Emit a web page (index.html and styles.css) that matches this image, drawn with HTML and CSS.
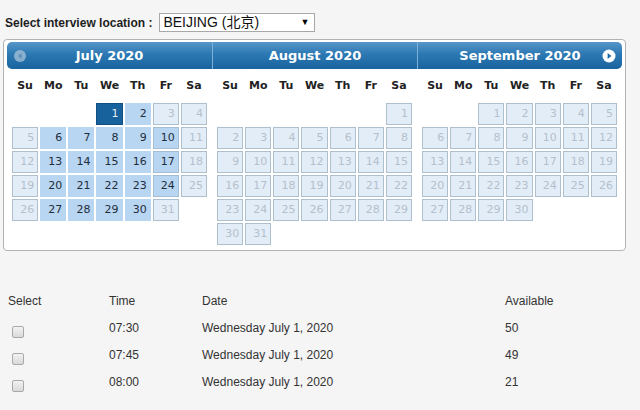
FILE: index.html
```html
<!DOCTYPE html>
<html>
<head>
<meta charset="utf-8">
<link rel="stylesheet" href="styles.css">
</head>
<body>
<div class="loc">
  <span class="loc-label">Select interview location :</span>
  <div class="select"><span class="select-text">BEIJING (北京)</span><span class="caret">▼</span></div>
</div>

<div class="cal">
  <div class="month first">
    <div class="mhead">
      <span class="nav prev"><svg width="14" height="14" viewBox="0 0 14 14"><circle cx="7" cy="7" r="6" fill="#a9c3da" opacity="0.75"/><path d="M8.6 4.2 L5 7 L8.6 9.8 Z" fill="#5f8db4"/></svg></span>
      <span class="title">July 2020</span>
    </div>
    <div class="grid dows"><span>Su</span><span>Mo</span><span>Tu</span><span>We</span><span>Th</span><span>Fr</span><span>Sa</span></div>
    <div class="grid days">
      <span></span><span></span><span></span>
      <a class="d sel">1</a><a class="d on">2</a><a class="d off">3</a><a class="d off">4</a>
      <a class="d off">5</a><a class="d on">6</a><a class="d on">7</a><a class="d on">8</a><a class="d on">9</a><a class="d on fr">10</a><a class="d off">11</a>
      <a class="d off">12</a><a class="d on">13</a><a class="d on">14</a><a class="d on">15</a><a class="d on">16</a><a class="d on fr">17</a><a class="d off">18</a>
      <a class="d off">19</a><a class="d on">20</a><a class="d on">21</a><a class="d on">22</a><a class="d on">23</a><a class="d on fr">24</a><a class="d off">25</a>
      <a class="d off">26</a><a class="d on">27</a><a class="d on">28</a><a class="d on">29</a><a class="d on">30</a><a class="d off">31</a>
    </div>
  </div>

  <div class="month mid">
    <div class="mhead"><span class="title">August 2020</span></div>
    <div class="grid dows"><span>Su</span><span>Mo</span><span>Tu</span><span>We</span><span>Th</span><span>Fr</span><span>Sa</span></div>
    <div class="grid days">
      <span></span><span></span><span></span><span></span><span></span><span></span>
      <a class="d off">1</a>
      <a class="d off">2</a><a class="d off">3</a><a class="d off">4</a><a class="d off">5</a><a class="d off">6</a><a class="d off">7</a><a class="d off">8</a>
      <a class="d off">9</a><a class="d off">10</a><a class="d off">11</a><a class="d off">12</a><a class="d off">13</a><a class="d off">14</a><a class="d off">15</a>
      <a class="d off">16</a><a class="d off">17</a><a class="d off">18</a><a class="d off">19</a><a class="d off">20</a><a class="d off">21</a><a class="d off">22</a>
      <a class="d off">23</a><a class="d off">24</a><a class="d off">25</a><a class="d off">26</a><a class="d off">27</a><a class="d off">28</a><a class="d off">29</a>
      <a class="d off">30</a><a class="d off">31</a>
    </div>
  </div>

  <div class="month last">
    <div class="mhead">
      <span class="title">September 2020</span>
      <span class="nav next"><svg width="14" height="14" viewBox="0 0 14 14"><circle cx="7" cy="7" r="6.5" fill="#ffffff"/><path d="M5.6 4 L9.4 7 L5.6 10 Z" fill="#1d68a3"/></svg></span>
    </div>
    <div class="grid dows"><span>Su</span><span>Mo</span><span>Tu</span><span>We</span><span>Th</span><span>Fr</span><span>Sa</span></div>
    <div class="grid days">
      <span></span><span></span>
      <a class="d off">1</a><a class="d off">2</a><a class="d off">3</a><a class="d off">4</a><a class="d off">5</a>
      <a class="d off">6</a><a class="d off">7</a><a class="d off">8</a><a class="d off">9</a><a class="d off">10</a><a class="d off">11</a><a class="d off">12</a>
      <a class="d off">13</a><a class="d off">14</a><a class="d off">15</a><a class="d off">16</a><a class="d off">17</a><a class="d off">18</a><a class="d off">19</a>
      <a class="d off">20</a><a class="d off">21</a><a class="d off">22</a><a class="d off">23</a><a class="d off">24</a><a class="d off">25</a><a class="d off">26</a>
      <a class="d off">27</a><a class="d off">28</a><a class="d off">29</a><a class="d off">30</a>
    </div>
  </div>
</div>

<div class="slots">
  <div class="th">Select</div><div class="th">Time</div><div class="th">Date</div><div class="th">Available</div>
  <div class="cb-cell"><input type="checkbox" class="cb"></div><div>07:30</div><div>Wednesday July 1, 2020</div><div>50</div>
  <div class="cb-cell"><input type="checkbox" class="cb"></div><div>07:45</div><div>Wednesday July 1, 2020</div><div>49</div>
  <div class="cb-cell"><input type="checkbox" class="cb"></div><div>08:00</div><div>Wednesday July 1, 2020</div><div>21</div>
</div>
</body>
</html>
```

FILE: styles.css
```css
html, body {
  margin: 0;
  padding: 0;
}
body {
  background: #f5f5f5;
  font-family: "Liberation Sans", Arial, sans-serif;
  color: #333;
  width: 640px;
  height: 410px;
  overflow: hidden;
}

/* location selector */
.loc {
  display: flex;
  align-items: center;
  padding: 13px 0 0 5px;
  height: 19px;
}
.loc-label {
  font-weight: bold;
  font-size: 12px;
  color: #1e1e1e;
}
.select {
  margin-left: 7px;
  width: 156px;
  height: 19px;
  box-sizing: border-box;
  border: 1px solid #a8a8a8;
  background: #fff;
  display: flex;
  align-items: center;
  justify-content: space-between;
  padding: 0 5px 0 3px;
  font-family: "Liberation Sans", "Noto Sans CJK SC", sans-serif;
  font-size: 14px;
  color: #111;
}
.select-text {
  line-height: 17px;
}
.caret {
  font-size: 9px;
  color: #000;
  line-height: 17px;
}

/* calendar */
.cal {
  margin: 7px 0 0 3px;
  width: 623px;
  box-sizing: border-box;
  border: 1px solid #b2b2b2;
  border-radius: 4px;
  background: #fff;
  padding: 2px 3px 5px 3px;
  display: flex;
  align-items: flex-start;
  font-family: "DejaVu Sans", Verdana, sans-serif;
}
.month {
  width: 205px;
  flex: 0 0 205px;
}
.mhead {
  position: relative;
  height: 27px;
  background: linear-gradient(#5796c9 0%, #2c78b3 45%, #19649f 100%);
  display: flex;
  align-items: center;
  justify-content: center;
  box-sizing: border-box;
}
.first .mhead {
  border-radius: 5px 0 0 5px;
}
.last .mhead {
  border-radius: 0 5px 5px 0;
}
.mid .mhead, .last .mhead {
  border-left: 1px solid #7fb0d8;
}
.title {
  color: #fff;
  font-weight: bold;
  font-size: 13px;
}
.nav {
  position: absolute;
  top: 7px;
  width: 14px;
  height: 14px;
  display: block;
}
.nav svg {
  display: block;
}
.prev {
  left: 6px;
}
.next {
  right: 6px;
}

.grid {
  width: 195px;
  margin: 0 auto;
  display: grid;
  grid-template-columns: repeat(7, 1fr);
  column-gap: 2px;
}
.dows {
  height: 34px;
  align-items: center;
}
.dows span {
  text-align: center;
  font-weight: bold;
  font-size: 11px;
  color: #222;
  padding-bottom: 1px;
}
.days {
  row-gap: 2px;
  grid-auto-rows: 22px;
}
.d {
  display: block;
  box-sizing: border-box;
  height: 22px;
  line-height: 20px;
  text-align: right;
  padding-right: 3px;
  font-size: 11px;
  border: 1px solid transparent;
}
.on {
  background: #b8d5f1;
  border-color: #b8d5f1;
  color: #1f2e3d;
}
.on.fr {
  border-color: #a6bed2;
}
.off {
  background: #e3edf7;
  border-color: #aebfce;
  color: #b3c0cd;
}
.sel {
  background: #17619d;
  border-color: #0f4f84;
  color: #e6eef6;
}

/* slots table */
.slots {
  margin-top: 36px;
  padding-left: 8px;
  display: grid;
  grid-template-columns: 101px 93px 303px 1fr;
  grid-auto-rows: 27px;
  align-items: center;
  font-size: 12px;
  color: #333;
}
.cb-cell {
  height: 27px;
  display: flex;
  align-items: center;
}
.cb {
  appearance: none;
  -webkit-appearance: none;
  margin: 8px 0 0 4px;
  width: 12px;
  height: 12px;
  box-sizing: border-box;
  border: 1px solid #a9a9a9;
  border-radius: 2px;
  background: linear-gradient(#f2f2f2, #d9d9d9);
}
```
